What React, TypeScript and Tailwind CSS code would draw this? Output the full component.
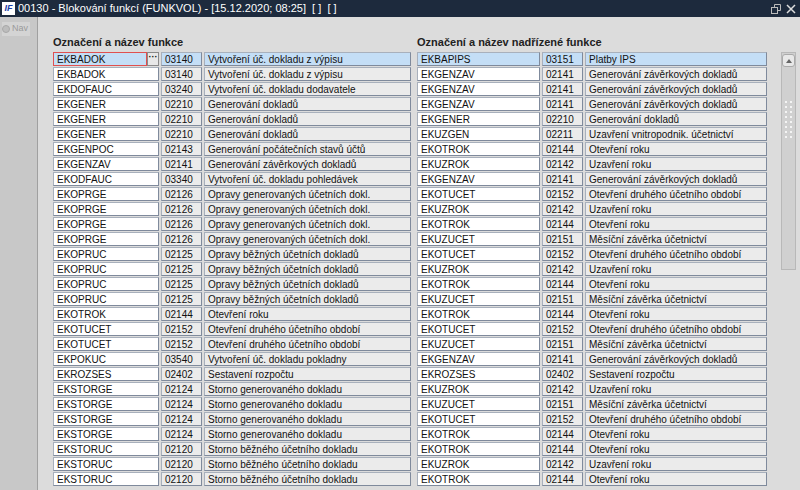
const left: [string, string, string][] = [
  ["EKBADOK", "03140", "Vytvoření úč. dokladu z výpisu"],
  ["EKBADOK", "03140", "Vytvoření úč. dokladu z výpisu"],
  ["EKDOFAUC", "03240", "Vytvoření úč. dokladu dodavatele"],
  ["EKGENER", "02210", "Generování dokladů"],
  ["EKGENER", "02210", "Generování dokladů"],
  ["EKGENER", "02210", "Generování dokladů"],
  ["EKGENPOC", "02143", "Generování počátečních stavů účtů"],
  ["EKGENZAV", "02141", "Generování závěrkových dokladů"],
  ["EKODFAUC", "03340", "Vytvoření úč. dokladu pohledávek"],
  ["EKOPRGE", "02126", "Opravy generovaných účetních dokl."],
  ["EKOPRGE", "02126", "Opravy generovaných účetních dokl."],
  ["EKOPRGE", "02126", "Opravy generovaných účetních dokl."],
  ["EKOPRGE", "02126", "Opravy generovaných účetních dokl."],
  ["EKOPRUC", "02125", "Opravy běžných účetních dokladů"],
  ["EKOPRUC", "02125", "Opravy běžných účetních dokladů"],
  ["EKOPRUC", "02125", "Opravy běžných účetních dokladů"],
  ["EKOPRUC", "02125", "Opravy běžných účetních dokladů"],
  ["EKOTROK", "02144", "Otevření roku"],
  ["EKOTUCET", "02152", "Otevření druhého účetního období"],
  ["EKOTUCET", "02152", "Otevření druhého účetního období"],
  ["EKPOKUC", "03540", "Vytvoření úč. dokladu pokladny"],
  ["EKROZSES", "02402", "Sestavení rozpočtu"],
  ["EKSTORGE", "02124", "Storno generovaného dokladu"],
  ["EKSTORGE", "02124", "Storno generovaného dokladu"],
  ["EKSTORGE", "02124", "Storno generovaného dokladu"],
  ["EKSTORGE", "02124", "Storno generovaného dokladu"],
  ["EKSTORUC", "02120", "Storno běžného účetního dokladu"],
  ["EKSTORUC", "02120", "Storno běžného účetního dokladu"],
  ["EKSTORUC", "02120", "Storno běžného účetního dokladu"],
];

const right: [string, string, string][] = [
  ["EKBAPIPS", "03151", "Platby IPS"],
  ["EKGENZAV", "02141", "Generování závěrkových dokladů"],
  ["EKGENZAV", "02141", "Generování závěrkových dokladů"],
  ["EKGENZAV", "02141", "Generování závěrkových dokladů"],
  ["EKGENER", "02210", "Generování dokladů"],
  ["EKUZGEN", "02211", "Uzavření vnitropodnik. účetnictví"],
  ["EKOTROK", "02144", "Otevření roku"],
  ["EKUZROK", "02142", "Uzavření roku"],
  ["EKGENZAV", "02141", "Generování závěrkových dokladů"],
  ["EKOTUCET", "02152", "Otevření druhého účetního období"],
  ["EKUZROK", "02142", "Uzavření roku"],
  ["EKOTROK", "02144", "Otevření roku"],
  ["EKUZUCET", "02151", "Měsíční závěrka účetnictví"],
  ["EKOTUCET", "02152", "Otevření druhého účetního období"],
  ["EKUZROK", "02142", "Uzavření roku"],
  ["EKOTROK", "02144", "Otevření roku"],
  ["EKUZUCET", "02151", "Měsíční závěrka účetnictví"],
  ["EKOTROK", "02144", "Otevření roku"],
  ["EKOTUCET", "02152", "Otevření druhého účetního období"],
  ["EKUZUCET", "02151", "Měsíční závěrka účetnictví"],
  ["EKGENZAV", "02141", "Generování závěrkových dokladů"],
  ["EKROZSES", "02402", "Sestavení rozpočtu"],
  ["EKUZROK", "02142", "Uzavření roku"],
  ["EKUZUCET", "02151", "Měsíční závěrka účetnictví"],
  ["EKOTUCET", "02152", "Otevření druhého účetního období"],
  ["EKOTROK", "02144", "Otevření roku"],
  ["EKOTROK", "02144", "Otevření roku"],
  ["EKUZROK", "02142", "Uzavření roku"],
  ["EKOTROK", "02144", "Otevření roku"],
];

const base = "h-[14px] px-[3px] leading-[13px] border truncate";
const cell = `${base} border-[#a8b0bc] border-b-[#7f8a9c] border-r-[#7f8a9c]`;

function Grid({
  rows,
  widths,
  title,
  lookup,
}: {
  rows: [string, string, string][];
  widths: [string, string, string];
  title: string;
  lookup?: boolean;
}) {
  return (
    <div className="flex flex-col">
      <div className="h-[14px] font-bold text-[11px] leading-[14px] text-[#222] mb-[3px]">{title}</div>
      <div className="flex flex-col gap-[1px]">
        {rows.map((r, i) => {
          const sel = i === 0;
          return (
            <div key={i} className="flex gap-[2px]">
              <div className={`${widths[0]} flex ${sel ? "bg-[#c4def6]" : "bg-white"}`}>
                {sel && lookup ? (
                  <>
                    <div className={`${base} flex-1 border-[#e05050]`}>{r[0]}</div>
                    <div className="w-[12px] h-[14px] bg-[#e8e8e8] border border-[#8a8a8a] text-[9px] leading-[8px] text-center font-bold">
                      ···
                    </div>
                  </>
                ) : (
                  <div className={`${cell} flex-1`}>{r[0]}</div>
                )}
              </div>
              <div className={`${cell} ${widths[1]} ${sel ? "bg-[#c4def6]" : "bg-[#ebebeb]"}`}>{r[1]}</div>
              <div className={`${cell} ${widths[2]} ${sel ? "bg-[#c4def6]" : "bg-[#ebebeb]"}`}>{r[2]}</div>
            </div>
          );
        })}
      </div>
    </div>
  );
}

export default function App() {
  return (
    <div
      className="w-[800px] h-[490px] overflow-hidden flex flex-col bg-[#dcdcdc] text-[10px] text-[#111]"
      style={{ fontFamily: '"Liberation Sans", Arial, sans-serif' }}
    >
      <div className="h-[17px] bg-[#1d2a3d] flex items-center text-white text-[11px] shrink-0">
        <div className="w-[13px] h-[13px] ml-[2px] mr-[3px] bg-white text-[#1a3ea8] text-[9px] font-bold italic leading-[13px] text-center">
          IF
        </div>
        <span className="flex-1">00130 - Blokování funkcí (FUNKVOL) - [15.12.2020; 08:25]&nbsp; [ ]&nbsp; [ ]</span>
        <svg width="10" height="10" viewBox="0 0 10 10" className="mr-[5px]" fill="none" stroke="#bbb">
          <rect x="0.5" y="3.5" width="6" height="6" />
          <path d="M3.5 3.5V0.5H9.5V6.5H6.5" />
        </svg>
        <svg width="10" height="10" viewBox="0 0 10 10" className="mr-[4px]" stroke="#ddd" strokeWidth="1.5">
          <path d="M1 1L9 9M9 1L1 9" />
        </svg>
      </div>
      <div className="flex flex-1 min-h-0">
        <div className="w-[38px] bg-[#c8c8c8] border-r border-[#a0a0a0] shrink-0 pt-[5px] pl-[2px]">
          <div className="flex items-center gap-[2px] text-[#9a9a9a] text-[9px] bg-[#d4d4d4] w-[28px]">
            <span className="w-[8px] h-[8px] rounded-full bg-[#bdbdbd] border border-[#a8a8a8]" />
            Nav
          </div>
        </div>
        <div className="flex flex-1 pl-[15px] pt-[18px] gap-[6px]">
          <Grid
            rows={left}
            widths={["w-[106px]", "w-[41px]", "w-[207px]"]}
            title="Označení a název funkce"
            lookup
          />
          <Grid
            rows={right}
            widths={["w-[123px]", "w-[41px]", "w-[182px]"]}
            title="Označení a název nadřízené funkce"
          />
          <div className="ml-[8px] mt-[17px] w-[15px] h-[218px] bg-[#d0d0d0] border border-[#b8b8b8] flex flex-col items-center">
            <div className="w-[13px] h-[13px] mt-[1px] rounded-[3px] bg-[#e8e8e8] border border-[#aaa] flex items-center justify-center">
              <div className="w-0 h-0 border-l-[3px] border-r-[3px] border-b-[4px] border-l-transparent border-r-transparent border-b-[#666]" />
            </div>
            <div className="mt-[34px] grid grid-cols-2 gap-x-[3px] gap-y-[3px]">
              {Array.from({ length: 16 }).map((_, i) => (
                <div key={i} className="w-[2px] h-[2px] bg-[#f4f4f4]" />
              ))}
            </div>
          </div>
        </div>
      </div>
    </div>
  );
}
